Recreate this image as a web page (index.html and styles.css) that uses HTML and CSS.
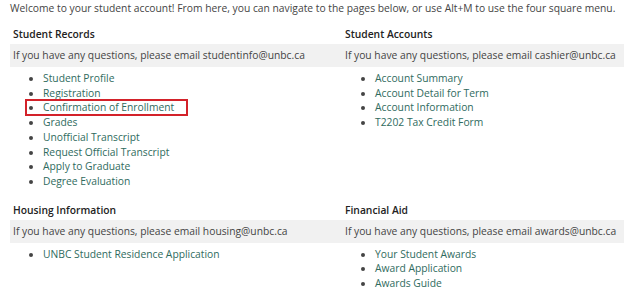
FILE: index.html
```html
<!DOCTYPE html>
<html lang="en">
<head>
    <meta charset="UTF-8">
    <title>Student Account</title>
    <link rel="stylesheet" href="styles.css">
</head>
<body>
    <p class="welcome">Welcome to your student account! From here, you can navigate to the pages below, or use Alt+M to use the four square menu.</p>
    <div class="grid">
        <div class="section">
            <h3>Student Records</h3>
            <p class="note">If you have any questions, please email studentinfo@unbc.ca</p>
            <ul>
                <li><a href="#">Student Profile</a></li>
                <li><a href="#">Registration</a></li>
                <li class="marked"><a href="#">Confirmation of Enrollment</a></li>
                <li><a href="#">Grades</a></li>
                <li><a href="#">Unofficial Transcript</a></li>
                <li><a href="#">Request Official Transcript</a></li>
                <li><a href="#">Apply to Graduate</a></li>
                <li><a href="#">Degree Evaluation</a></li>
            </ul>
        </div>
        <div class="section">
            <h3>Student Accounts</h3>
            <p class="note">If you have any questions, please email cashier@unbc.ca</p>
            <ul>
                <li><a href="#">Account Summary</a></li>
                <li><a href="#">Account Detail for Term</a></li>
                <li><a href="#">Account Information</a></li>
                <li><a href="#">T2202 Tax Credit Form</a></li>
            </ul>
        </div>
        <div class="section">
            <h3>Housing Information</h3>
            <p class="note">If you have any questions, please email housing@unbc.ca</p>
            <ul>
                <li><a href="#">UNBC Student Residence Application</a></li>
            </ul>
        </div>
        <div class="section">
            <h3>Financial Aid</h3>
            <p class="note">If you have any questions, please email awards@unbc.ca</p>
            <ul>
                <li><a href="#">Your Student Awards</a></li>
                <li><a href="#">Award Application</a></li>
                <li><a href="#">Awards Guide</a></li>
            </ul>
        </div>
    </div>
</body>
</html>
```

FILE: styles.css
```css
body {
    font-family: "Open Sans", Arial, sans-serif;
    font-size: 10.3px;
    color: #444;
    background: #fff;
    margin: 0;
    padding: 0 0 0 10px;
    overflow: hidden;
}
.welcome {
    margin: 0;
    line-height: 16px;
    white-space: nowrap;
}
.grid {
    display: grid;
    grid-template-columns: 332px 1fr;
    row-gap: 11px;
    margin-top: 8px;
}
h3 {
    margin: 0;
    padding: 0 3px;
    font-size: 10.3px;
    font-weight: 600;
    line-height: 20px;
    color: #222;
}
.note {
    margin: 0;
    padding: 0 3px;
    height: 23px;
    line-height: 23px;
    background: #f1f1f1;
    white-space: nowrap;
}
ul {
    margin: 4px 0 0;
    padding-left: 33px;
}
li {
    line-height: 14.7px;
}
a {
    color: #2f6b5e;
    text-decoration: none;
}
.marked {
    position: relative;
}
.marked::after {
    content: "";
    position: absolute;
    left: -18px;
    top: -1px;
    width: 159px;
    height: 13px;
    border: 2px solid #d3222a;
}
```
